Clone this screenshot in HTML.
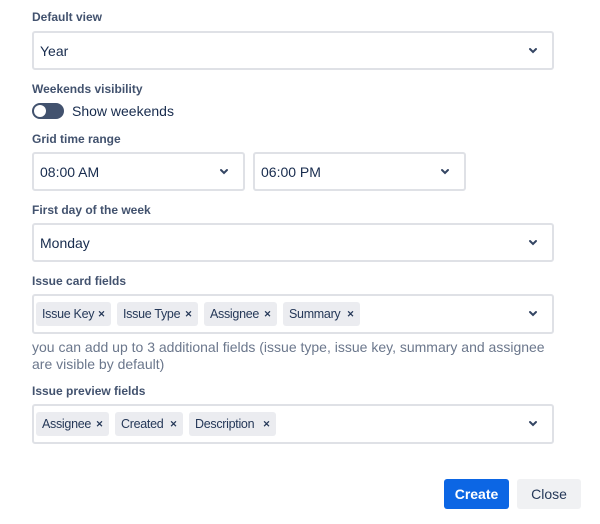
<!DOCTYPE html>
<html><head><style>
body{margin:0;width:600px;height:524px;background:#fff;font-family:"Liberation Sans",sans-serif;color:#172b4d;position:relative;overflow:hidden}
.l{position:absolute;left:32px;font-size:12px;font-weight:bold;color:#42526e}
.b{position:absolute;border:2px solid #dfe1e6;border-radius:3px;box-sizing:border-box;background:#fff;font-size:14px}
.b .t{position:absolute;left:6px;top:50%;transform:translateY(-50%)}
.c{position:absolute;right:14px;top:50%;margin-top:-4px;width:10px;height:7px}
.tag{position:absolute;top:6px;height:24px;background:#ebecf0;border-radius:3px;font-size:12.5px;letter-spacing:-0.3px;color:#253858;line-height:24px;padding-left:6px;box-sizing:border-box;white-space:nowrap}
.tag b{position:absolute;right:6px;top:0;font-size:9px;color:#253858}
.btn{position:absolute;top:479px;height:30px;border-radius:3px;font-size:14px;line-height:30px;text-align:center;font-weight:bold}
</style></head><body>
<svg width="0" height="0" style="position:absolute"><defs><symbol id="ch" viewBox="0 0 10 7"><path d="M2 2l3 3 3-3" stroke="#344563" stroke-width="2" fill="none" stroke-linecap="round"/></symbol></defs></svg>
<div class="l" style="top:10px">Default view</div>
<div class="b" style="left:32px;top:31px;width:522px;height:39px"><span class="t">Year</span><svg class="c"><use href="#ch"/></svg></div>
<div class="l" style="top:82px">Weekends visibility</div>
<div style="position:absolute;left:32px;top:103px;width:32px;height:16px;border-radius:8px;background:#42526e"><div style="position:absolute;left:2px;top:2px;width:12px;height:12px;border-radius:50%;background:#fff"></div></div>
<div style="position:absolute;left:72px;top:103px;font-size:14px;color:#172b4d">Show weekends</div>
<div class="l" style="top:132px">Grid time range</div>
<div class="b" style="left:32px;top:152px;width:213px;height:39px"><span class="t">08:00 AM</span><svg class="c"><use href="#ch"/></svg></div>
<div class="b" style="left:253px;top:152px;width:213px;height:39px"><span class="t">06:00 PM</span><svg class="c"><use href="#ch"/></svg></div>
<div class="l" style="top:203px">First day of the week</div>
<div class="b" style="left:32px;top:223px;width:522px;height:39px"><span class="t">Monday</span><svg class="c"><use href="#ch"/></svg></div>
<div class="l" style="top:274px">Issue card fields</div>
<div class="b" style="left:32px;top:294px;width:522px;height:40px">
<div class="tag" style="left:2px;width:75px">Issue Key<b>✕</b></div>
<div class="tag" style="left:83px;width:81px">Issue Type<b>✕</b></div>
<div class="tag" style="left:170px;width:73px">Assignee<b>✕</b></div>
<div class="tag" style="left:249px;width:77px">Summary<b>✕</b></div>
<svg class="c"><use href="#ch"/></svg></div>
<div style="position:absolute;left:32px;top:339px;width:530px;font-size:14px;line-height:17px;color:#6b778c">you can add up to 3 additional fields (issue type, issue key, summary and assignee are visible by default)</div>
<div class="l" style="top:384px">Issue preview fields</div>
<div class="b" style="left:32px;top:404px;width:522px;height:40px">
<div class="tag" style="left:2px;width:73px">Assignee<b>✕</b></div>
<div class="tag" style="left:81px;width:68px">Created<b>✕</b></div>
<div class="tag" style="left:155px;width:87px">Description<b>✕</b></div>
<svg class="c"><use href="#ch"/></svg></div>
<div class="btn" style="left:444px;width:65px;background:#0c66e4;color:#fff">Create</div>
<div class="btn" style="left:517px;width:64px;background:#f0f1f3;color:#253858;font-weight:normal">Close</div>
</body></html>
